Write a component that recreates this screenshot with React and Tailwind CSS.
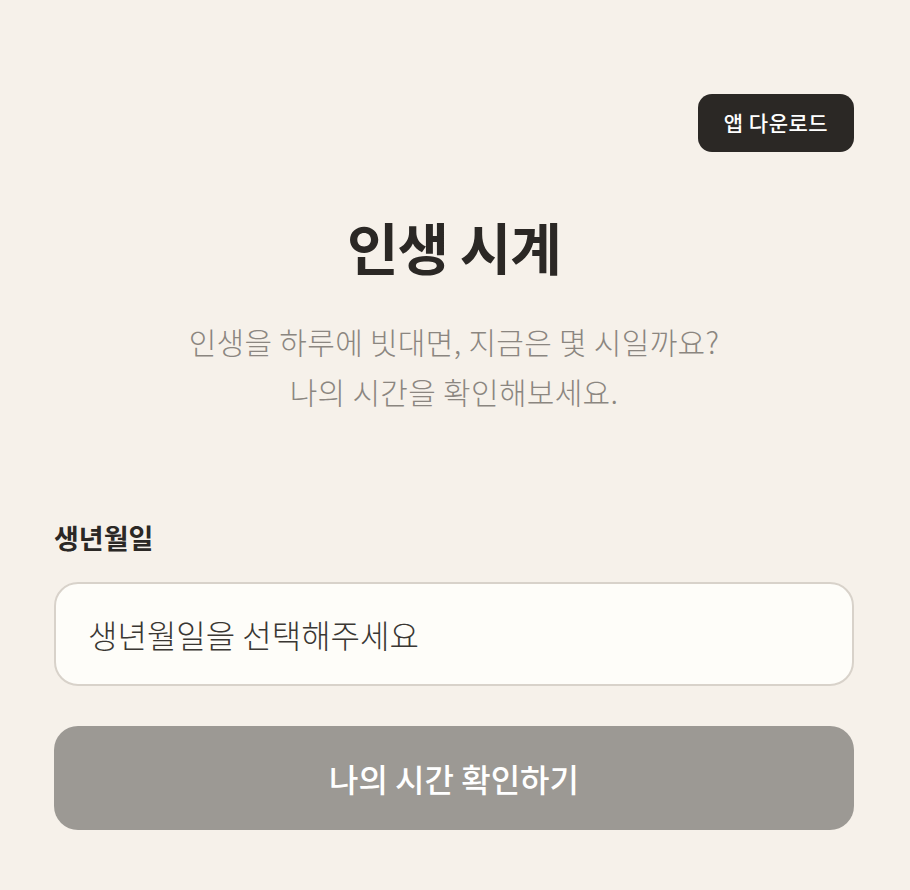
export default function App() {
  return (
    <div
      className="min-h-screen bg-[#f6f1ea] text-[#2b2825]"
      style={{ fontFamily: '"Noto Sans CJK KR", "Noto Sans", sans-serif' }}
    >
      <div className="mx-auto w-[910px] pl-[54px] pr-[56px] pt-[94px] pb-[60px]">
        {/* 상단: 앱 다운로드 */}
        <div className="flex justify-end">
          <button className="h-[58px] w-[156px] rounded-[14px] bg-[#2b2825] text-[21px] font-medium tracking-[0.5px] text-white">
            앱 다운로드
          </button>
        </div>

        {/* 타이틀 */}
        <h1 className="mt-[60px] text-center text-[56px] font-bold leading-[67px] tracking-[-1px]">
          인생 시계
        </h1>
        <p className="mt-[37px] text-center text-[30px] font-light leading-[50px] tracking-[0.3px] text-[#8b8680]">
          인생을 하루에 빗대면, 지금은 몇 시일까요?
          <br />
          나의 시간을 확인해보세요.
        </p>

        {/* 입력 폼 */}
        <div className="mt-[104px]">
          <label className="block text-[27px] font-bold leading-[36px]">생년월일</label>
          <div className="mt-[26px] flex h-[104px] items-center rounded-[24px] border-2 border-[#d8d2ca] bg-[#fefdf9] px-[32px]">
            <span className="text-[32px] font-light text-[#3a3733]">생년월일을 선택해주세요</span>
          </div>
          <button className="mt-[40px] flex h-[104px] w-full items-center justify-center rounded-[24px] bg-[#9c9994] text-[32px] font-medium text-white">
            나의 시간 확인하기
          </button>
        </div>
      </div>
    </div>
  );
}
